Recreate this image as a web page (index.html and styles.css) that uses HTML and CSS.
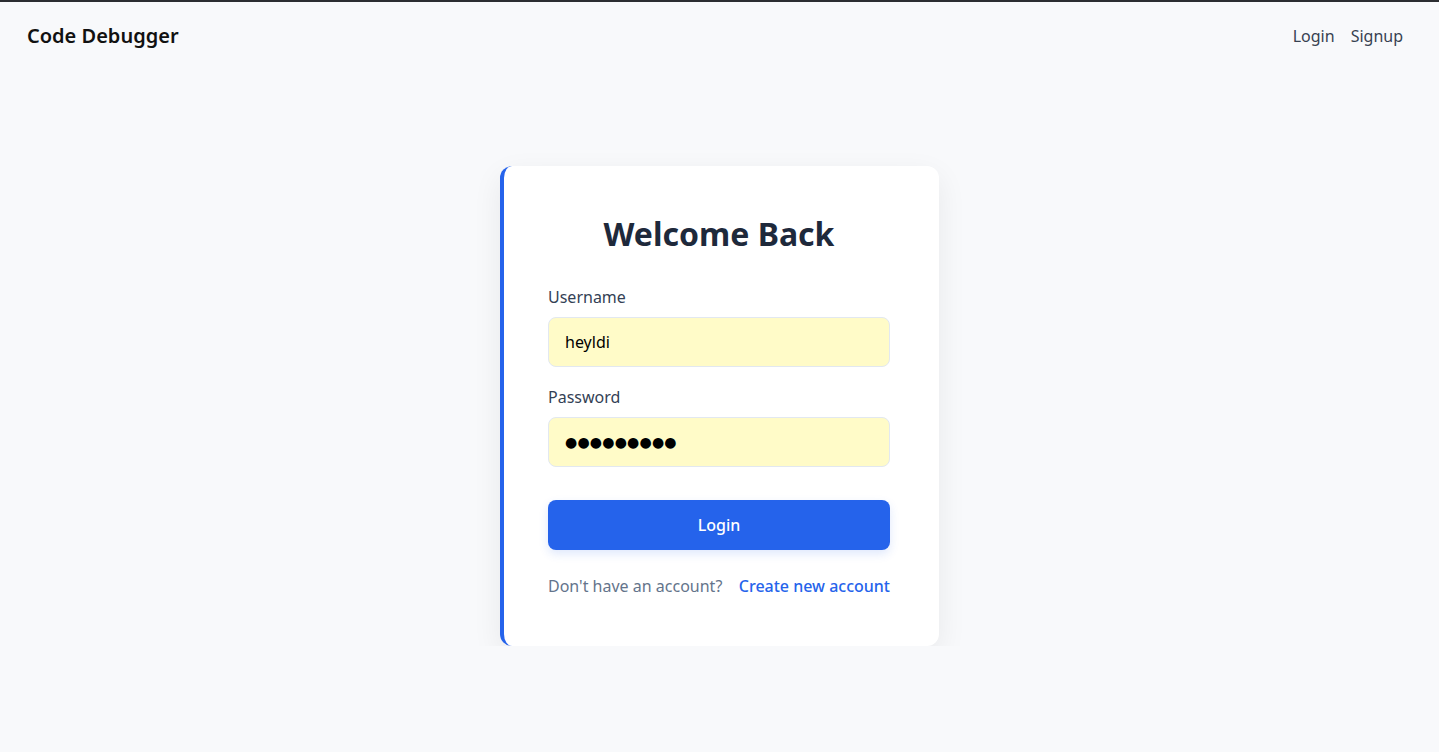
FILE: index.html
```html
<!DOCTYPE html>
<html lang="en">
<head>
    <meta charset="UTF-8">
    <meta name="viewport" content="width=device-width, initial-scale=1.0">
    <title>Code Debugger - Login</title>
    <link rel="stylesheet" href="styles.css">
</head>
<body>
    <header class="topbar">
        <div class="brand">Code Debugger</div>
        <nav class="nav">
            <a href="#">Login</a>
            <a href="#">Signup</a>
        </nav>
    </header>

    <main class="page">
        <div class="card">
            <h1>Welcome Back</h1>
            <form class="form">
                <label for="username">Username</label>
                <input type="text" id="username" value="heyldi">
                <label for="password">Password</label>
                <input type="text" id="password" class="masked" value="●●●●●●●●●">
                <button type="button" class="btn">Login</button>
            </form>
            <div class="switch">
                <span>Don't have an account?</span>
                <a href="#">Create new account</a>
            </div>
        </div>
    </main>
</body>
</html>
```

FILE: styles.css
```css
body {
    margin: 0;
    font-family: "Noto Sans", "Open Sans", sans-serif;
    background-color: #f8f9fb;
    color: #1f2937;
    border-top: 2px solid #2b2d31;
}

.topbar {
    display: flex;
    justify-content: space-between;
    align-items: center;
    padding: 20px 36px 20px 27px;
}

.brand {
    font-size: 20px;
    line-height: 28px;
    font-weight: 600;
    color: #111;
}

.nav {
    display: flex;
    gap: 16px;
}

.nav a {
    font-size: 16px;
    line-height: 24px;
    color: #374151;
    text-decoration: none;
}

.page {
    display: flex;
    justify-content: center;
    padding-top: 96px;
}

.card {
    width: 439px;
    box-sizing: border-box;
    background: white;
    border-left: 4px solid #2563eb;
    border-radius: 12px;
    padding: 48px 49px 48px 44px;
    box-shadow: 0 10px 30px rgba(0, 0, 0, 0.07);
}

h1 {
    margin: 0 0 31px;
    text-align: center;
    font-size: 32px;
    line-height: 40px;
    font-weight: 700;
    color: #1e293b;
}

.form {
    display: flex;
    flex-direction: column;
}

label {
    font-size: 16px;
    line-height: 24px;
    color: #334155;
    margin-bottom: 8px;
}

input {
    font-family: inherit;
    font-size: 16px;
    line-height: 24px;
    height: 50px;
    box-sizing: border-box;
    padding: 12px 16px;
    border: 1px solid #e2e8f0;
    border-radius: 8px;
    background-color: #fffbc8;
    color: #000;
    margin-bottom: 18px;
    outline: none;
}

.masked {
    font-family: "DejaVu Sans", sans-serif;
    font-size: 14px;
    letter-spacing: 0.2px;
    margin-bottom: 33px;
}

.btn {
    font-family: inherit;
    font-size: 16px;
    line-height: 24px;
    font-weight: 500;
    height: 50px;
    border: none;
    border-radius: 8px;
    background-color: #2563eb;
    color: white;
    cursor: pointer;
    box-shadow: 0 4px 10px rgba(37, 99, 235, 0.15);
}

.btn:hover {
    background-color: #1d4ed8;
}

.switch {
    display: flex;
    justify-content: space-between;
    margin-top: 24px;
    font-size: 16px;
    line-height: 24px;
}

.switch span {
    color: #64748b;
}

.switch a {
    color: #2563eb;
    font-weight: 500;
    text-decoration: none;
}
```
